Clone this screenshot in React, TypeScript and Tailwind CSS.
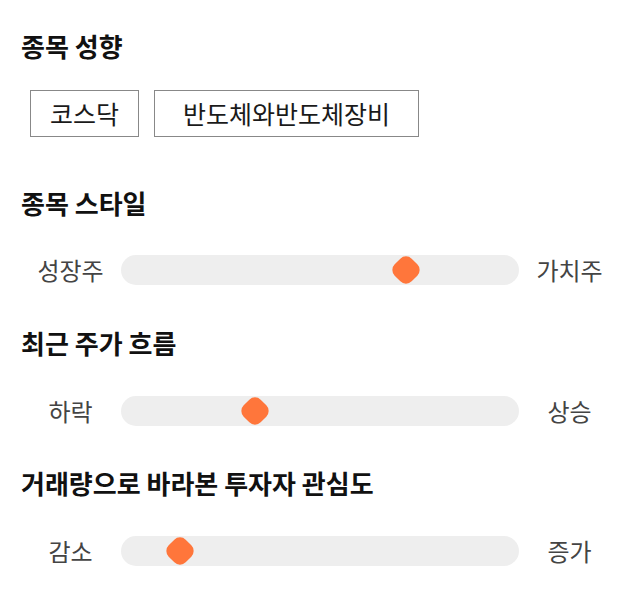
import React from 'react';

const font = { fontFamily: '"Noto Sans CJK KR", "Noto Sans", sans-serif' };

type SliderProps = { left: string; right: string; value: number };

function Slider({ left, right, value }: SliderProps) {
  return (
    <div className="flex items-center h-[30px]">
      <div className="w-[101px] text-center text-[24px] leading-[30px] text-[#444]">{left}</div>
      <div className="relative flex-1 h-[30px] rounded-full bg-[#eeeeee]">
        <div
          className="absolute top-[3px] w-[24px] h-[24px] rounded-[8px] bg-[#ff763b] rotate-45"
          style={{ left: `${value}px` }}
        />
      </div>
      <div className="w-[101px] text-center text-[24px] leading-[30px] text-[#444]">{right}</div>
    </div>
  );
}

export default function App() {
  return (
    <div className="bg-white w-[640px] h-[606px] px-[20px] pt-[31px] text-[#111]" style={font}>
      <h2 className="h-[30px] leading-[30px] text-[26px] font-bold pl-[1px]">종목 성향</h2>
      <div className="flex gap-[15px] mt-[29px] pl-[10px]">
        <span className="h-[47px] px-[19px] flex items-center border border-[#888] text-[25px] text-[#1a1a1a]">코스닥</span>
        <span className="h-[47px] px-[28px] flex items-center border border-[#888] text-[25px] text-[#1a1a1a]">반도체와반도체장비</span>
      </div>

      <h2 className="mt-[51px] h-[30px] leading-[30px] text-[26px] font-bold pl-[1px]">종목 스타일</h2>
      <div className="mt-[37px]">
        <Slider left="성장주" right="가치주" value={273} />
      </div>

      <h2 className="mt-[43px] h-[30px] leading-[30px] text-[26px] font-bold pl-[1px]">최근 주가 흐름</h2>
      <div className="mt-[38px]">
        <Slider left="하락" right="상승" value={122} />
      </div>

      <h2 className="mt-[42px] h-[30px] leading-[30px] text-[26px] font-bold pl-[1px]">거래량으로 바라본 투자자 관심도</h2>
      <div className="mt-[38px]">
        <Slider left="감소" right="증가" value={47} />
      </div>
    </div>
  );
}
